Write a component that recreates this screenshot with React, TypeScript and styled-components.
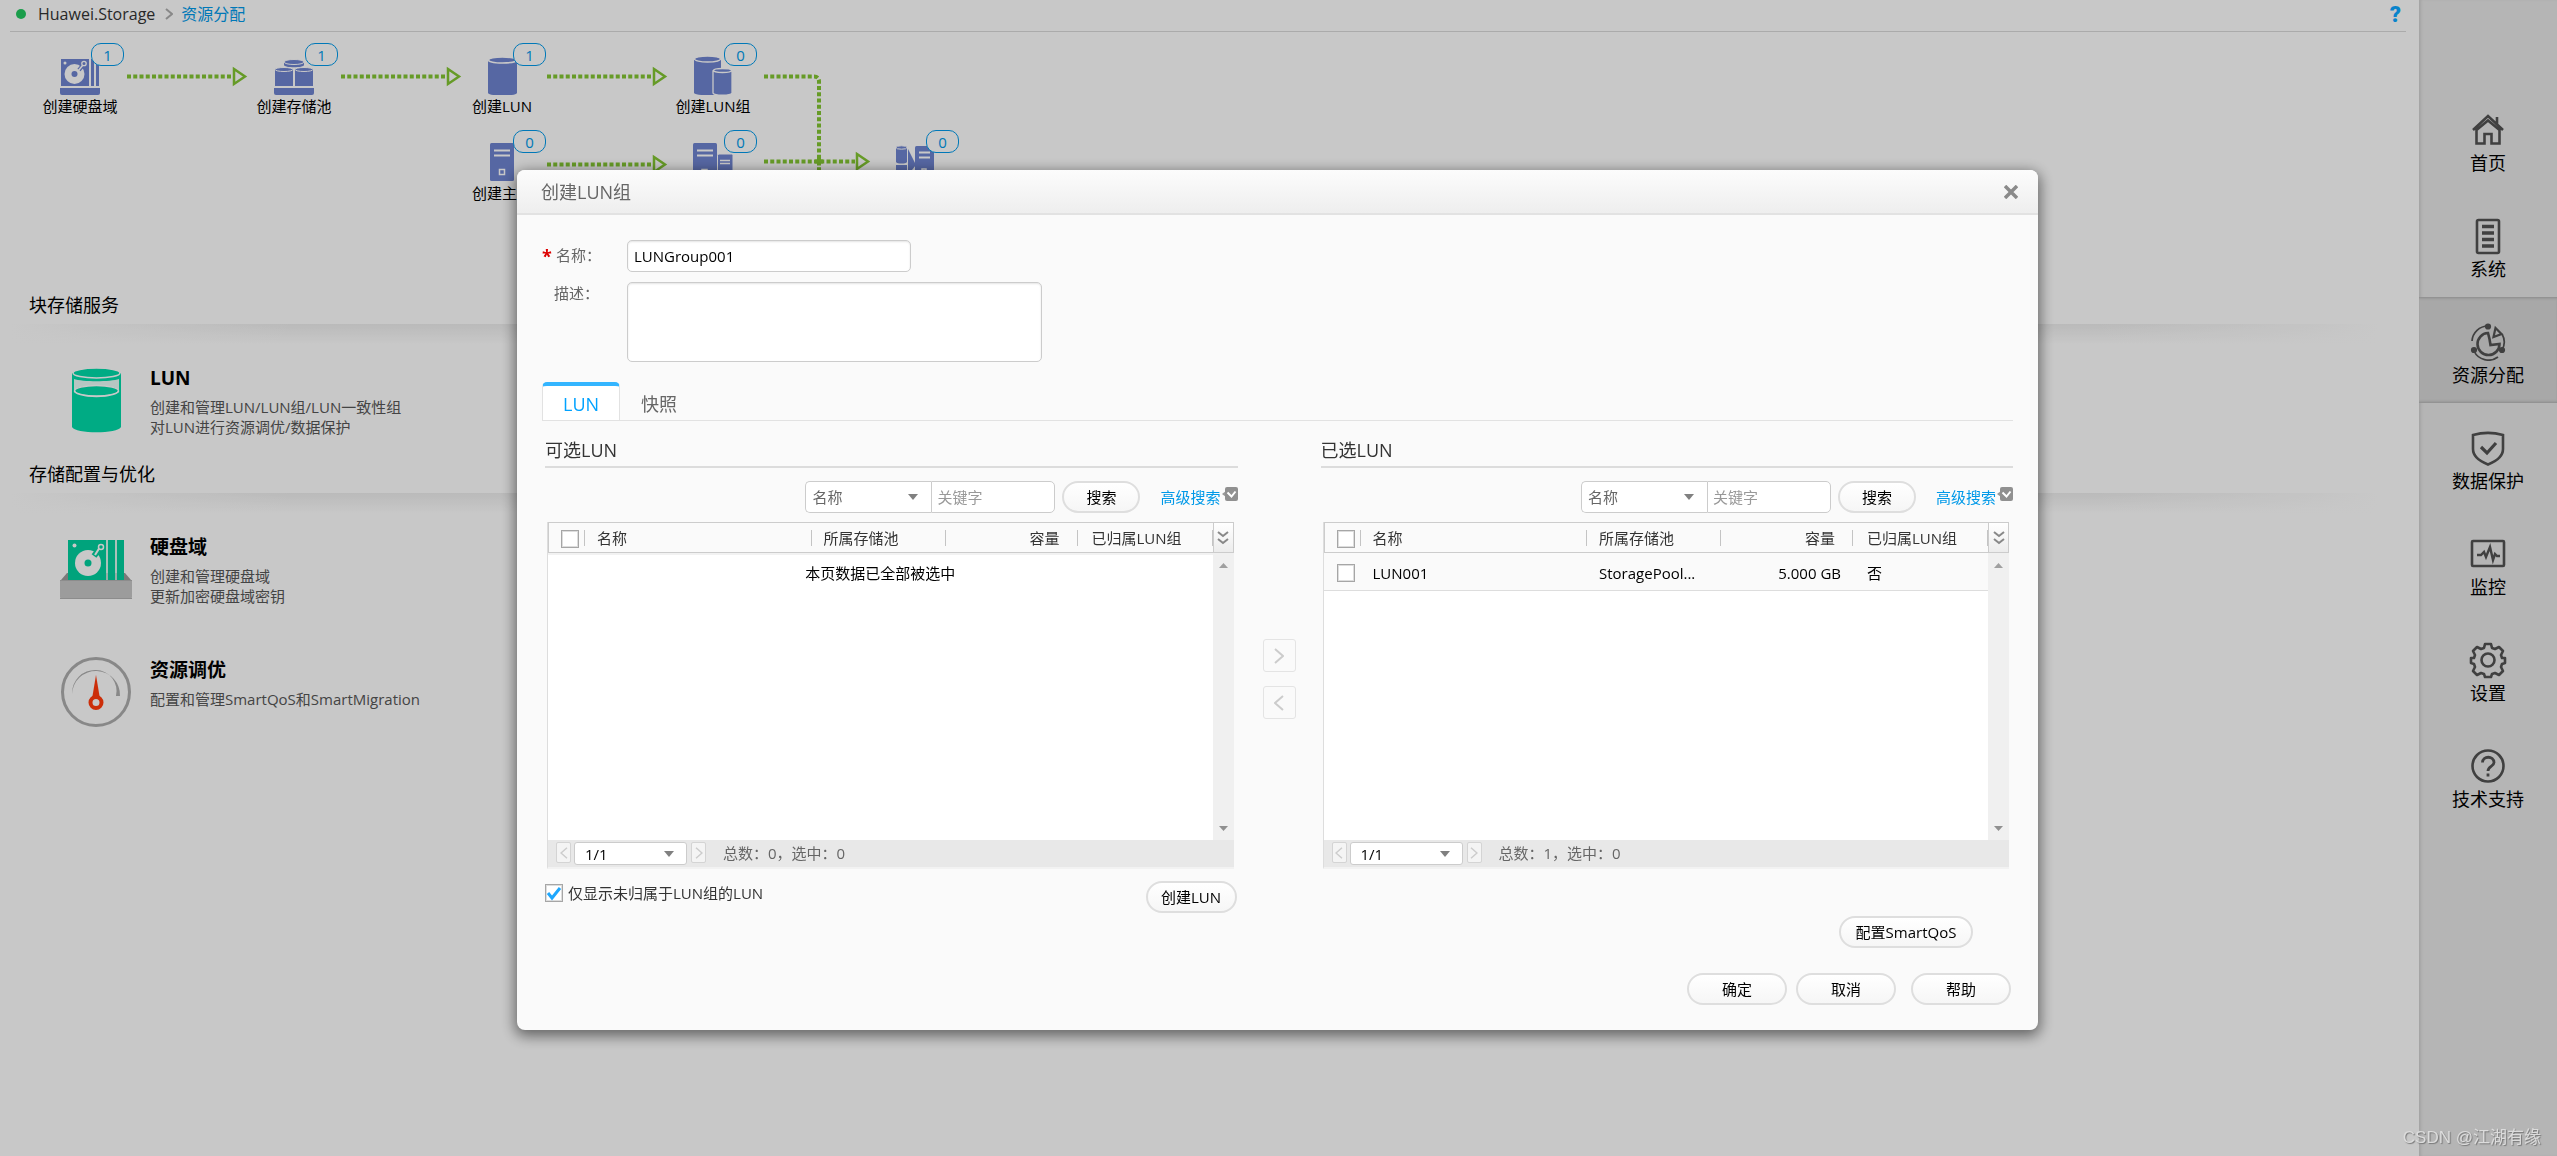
import React, { useState } from "react";
import styled, { createGlobalStyle, css } from "styled-components";

const GlobalStyle = createGlobalStyle`
  * { box-sizing: border-box; }
  body {
    margin: 0;
    background: #fafafa;
    color: #000;
    font-family: "Open Sans", "Noto Sans CJK SC", sans-serif;
    font-size: 15px;
    line-height: 20px;
  }
  button, input, select, textarea { font: inherit; color: inherit; margin: 0; }
  button { cursor: pointer; }
  h1, h2, h3, p, ul { margin: 0; padding: 0; font-weight: 400; }
  ul { list-style: none; }
  a { color: inherit; text-decoration: none; }
`;

/* ---------- page frame ---------- */

const Shell = styled.div`
  display: flex;
  min-height: 100vh;
`;

const Main = styled.main`
  flex: 1;
  min-width: 0;
`;

const TopBar = styled.header`
  display: flex;
  align-items: center;
  height: 32px;
  margin: 0 13px 0 10px;
  padding: 0 5px 3px 6px;
  border-bottom: 1px solid #d6d6d6;
  font-size: 16px;
  color: #333;
`;

const StatusDot = styled.span`
  width: 10px;
  height: 10px;
  margin-right: 12px;
  border-radius: 50%;
  background: #22c55e;
`;

const Crumb = styled.a<{ $current?: boolean }>`
  color: ${(p) => (p.$current ? "#0097e6" : "#333")};
`;

const CrumbArrow = styled.svg`
  margin: 0 8px 0 10px;
`;

const HelpButton = styled.button`
  margin-left: auto;
  padding: 2px 0 0;
  border: 0;
  background: none;
  color: #0aa5ff;
  font-family: Roboto, sans-serif;
  font-size: 22px;
  font-weight: 900;
`;

/* ---------- workflow diagram ---------- */

const FlowCanvas = styled.div`
  position: relative;
  height: 254px;
`;

const Connectors = styled.svg`
  position: absolute;
  left: 0;
  top: 0;
  overflow: visible;
`;

const FlowNode = styled.a`
  position: absolute;
  display: flex;
  flex-direction: column;
  align-items: center;
  width: 100px;
`;

const FlowBadge = styled.span`
  position: absolute;
  left: 61px;
  top: 0;
  width: 33px;
  height: 23px;
  border: 1px solid #0097e6;
  border-radius: 10px;
  background: #fafafa;
  color: #0097e6;
  line-height: 22px;
  text-align: center;
`;

const FlowIcon = styled.svg`
  margin: 12px 0 1px;
`;

/* ---------- service sections ---------- */

const SectionTitle = styled.h2`
  padding-left: 29px;
  font-size: 18px;
  line-height: 38px;
`;

const SectionShade = styled.div`
  height: 20px;
  margin: 0 40px 0 10px;
  background: linear-gradient(to right, #fafafa, rgba(250, 250, 250, 0) 12%, rgba(250, 250, 250, 0) 88%, #fafafa),
    linear-gradient(to bottom, #e9e9e9, #fafafa);
`;

const ServiceList = styled.div`
  display: flex;
  flex-direction: column;
  gap: 50px;
  padding: 21px 0 17px 60px;
`;

const Service = styled.a`
  display: flex;
  gap: 18px;
  align-items: flex-start;
  color: #555;
`;

const ServiceName = styled.h3`
  margin-bottom: 6px;
  color: #000;
  font-size: 19px;
  font-weight: 700;
  line-height: 26px;
`;

/* ---------- right navigation ---------- */

const SideNav = styled.nav`
  width: 138px;
  padding-top: 85px;
  background: #e3e3e3;
  box-shadow: inset 3px 0 3px -1px #cccccc;
`;

const SideLink = styled.a<{ $active?: boolean }>`
  display: flex;
  flex-direction: column;
  align-items: center;
  height: 106px;
  padding-top: 26px;
  font-size: 18px;
  line-height: 28px;
  ${(p) =>
    p.$active &&
    css`
      background: #d2d2d2;
      box-shadow: inset 0 3px 3px -2px #aaa, inset 0 -3px 3px -2px #aaa;
    `}
`;

/* ---------- dialog ---------- */

const Backdrop = styled.div`
  position: fixed;
  inset: 0;
  display: flex;
  justify-content: center;
  align-items: flex-start;
  padding: 170px 2px 0 0;
  background: rgba(0, 0, 0, 0.2);
`;

const Dialog = styled.section`
  width: 1521px;
  max-width: calc(100vw - 48px);
  border-radius: 8px;
  background: #fafafa;
  box-shadow: 0 4px 14px 2px rgba(0, 0, 0, 0.5);
`;

const DialogHead = styled.header`
  display: flex;
  align-items: center;
  justify-content: space-between;
  height: 45px;
  padding: 0 18px 0 24px;
  border-bottom: 2px solid #e2e2e2;
  border-radius: 8px 8px 0 0;
  background: linear-gradient(#fcfcfc, #eeeeee);
  color: #666;
`;

const DialogTitle = styled.h1`
  font-size: 18px;
  line-height: 24px;
`;

const CloseButton = styled.button`
  display: flex;
  padding: 2px;
  border: 0;
  background: none;
`;

const DialogBody = styled.div`
  padding: 25px 25px 25px;
`;

const Field = styled.div`
  display: flex;
  align-items: flex-start;
  gap: 10px;
  margin-bottom: 10px;
  color: #666;
`;

const FieldLabel = styled.label<{ $tall?: boolean }>`
  display: flex;
  width: 75px;
  line-height: ${(p) => (p.$tall ? 22 : 30)}px;
`;

const Required = styled.span`
  width: 14px;
  color: #d00;
  font-weight: 700;
  font-size: 18px;
  line-height: 32px;
`;

const FieldIndent = styled.span`
  width: 12px;
`;

const boxed = css`
  border: 1px solid #ccc;
  border-radius: 5px;
  background: #fff;
  box-shadow: inset 0 1px 2px #e4e4e4;
  outline: none;
`;

const NameInput = styled.input`
  ${boxed}
  width: 284px;
  height: 32px;
  padding: 0 6px;
  color: #000;
`;

const DescriptionInput = styled.textarea`
  ${boxed}
  display: block;
  width: 415px;
  height: 80px;
  padding: 6px;
  resize: none;
`;

const Tabs = styled.div`
  display: flex;
  margin-top: 20px;
  border-bottom: 1px solid #e2e2e2;
`;

const Tab = styled.button<{ $active?: boolean }>`
  height: 38px;
  padding: 2px 20px 0;
  border: 1px solid transparent;
  border-top: 4px solid ${(p) => (p.$active ? "#33b5ff" : "transparent")};
  border-bottom: 0;
  border-radius: 5px 5px 0 0;
  background: ${(p) => (p.$active ? "#fff" : "none")};
  color: ${(p) => (p.$active ? "#00a2ff" : "#666")};
  font-size: 18px;
  ${(p) => p.$active && "border-left-color: #e2e2e2; border-right-color: #e2e2e2;"}
`;

const Panels = styled.div`
  display: flex;
  padding: 16px 0 0 3px;
`;

const Panel = styled.div`
  flex: 1;
  min-width: 0;
`;

const PanelTitle = styled.h2`
  height: 31px;
  border-bottom: 2px solid #dcdcdc;
  color: #333;
  font-size: 18px;
  line-height: 26px;
`;

const SearchRow = styled.div`
  display: flex;
  align-items: center;
  justify-content: flex-end;
  margin: 13px 0 9px;
`;

const SelectWrap = styled.span<{ $width: number }>`
  display: inline-grid;
  align-items: center;
  width: ${(p) => p.$width}px;

  > * { grid-area: 1 / 1; }
  > svg { justify-self: end; margin-right: 12px; pointer-events: none; }
`;

const FieldSelect = styled.select`
  appearance: none;
  width: 100%;
  height: 32px;
  padding: 0 6px;
  border: 1px solid #ccc;
  border-right: 0;
  border-radius: 5px 0 0 5px;
  background: #fff;
  color: #666;
`;

const PageSelect = styled.select`
  appearance: none;
  width: 100%;
  height: 23px;
  padding: 0 10px;
  border: 1px solid #ccc;
  border-radius: 3px;
  background: #fff;
  color: #000;
`;

const KeywordInput = styled.input`
  width: 124px;
  height: 32px;
  padding: 0 5px;
  border: 1px solid #ccc;
  border-radius: 0 5px 5px 0;
  background: #fff;
  &::placeholder { color: #999; opacity: 1; }
`;

const PillButton = styled.button<{ $width: number }>`
  width: ${(p) => p.$width}px;
  height: 32px;
  padding: 0;
  border: 2px solid #dedede;
  border-radius: 16px;
  background: linear-gradient(#fff, #f6f6f6);
  color: #000;
`;

const SearchButton = styled(PillButton)`
  margin: 0 20px 0 7px;
`;

const AdvancedLink = styled.a`
  display: flex;
  align-items: flex-start;
  gap: 1px;
  color: #0099e8;
`;

const Grid = styled.div`
  width: calc(100% - 6px);
  margin-left: 2px;
  border-left: 1px solid #ddd;
  border-bottom: 2px solid #f2f2f2;
`;

const GridMain = styled.div`
  display: flex;
  height: 318px;
  background: #fff;
`;

const TableArea = styled.div`
  flex: 1;
  min-width: 0;
`;

const Table = styled.table`
  width: 100%;
  table-layout: fixed;
  border-collapse: separate;
  border-spacing: 0;
`;

const HeadCell = styled.th<{ $right?: boolean; $first?: boolean }>`
  height: 31px;
  padding: 0;
  border-top: 1px solid #ccc;
  border-bottom: 1px solid #ccc;
  ${(p) => p.$first && "border-left: 1px solid #ccc;"}
  background: #fafafa;
  box-shadow: 0 2px 0 #f2f2f2;
  color: #333;
  font-weight: 400;
  text-align: ${(p) => (p.$right ? "right" : "left")};
`;

const HeadLabel = styled.span<{ $right?: boolean; $wide?: boolean }>`
  display: block;
  height: 16px;
  padding: ${(p) => (p.$right ? "0 17px 0 0" : p.$wide ? "0 0 0 14px" : "0 0 0 12px")};
  border-right: 1px solid #c4c4c4;
  line-height: 16px;
  white-space: nowrap;
`;

const BodyCell = styled.td<{ $right?: boolean; $wide?: boolean }>`
  height: 38px;
  padding: ${(p) => (p.$right ? "2px 12px 0 0" : p.$wide ? "2px 0 0 14px" : "2px 0 0 12px")};
  border-bottom: 1px solid #ddd;
  background: #fafafa;
  text-align: ${(p) => (p.$right ? "right" : "left")};
  white-space: nowrap;
`;

const SelectCell = styled(BodyCell)`
  padding-left: 13px;
`;

const EmptyCell = styled.td`
  height: 40px;
  padding: 0;
  text-align: center;
`;

const CheckBox = styled.input`
  appearance: none;
  display: block;
  width: 18px;
  height: 18px;
  border: 1px solid #a6a6a6;
  background: #fff;
  box-shadow: inset 0 0 0 1px #ddd;
`;

const Side = styled.div`
  display: flex;
  flex-direction: column;
  width: 21px;
`;

const ColumnMenu = styled.button`
  display: flex;
  align-items: center;
  justify-content: center;
  height: 31px;
  padding: 0;
  border: 1px solid #ccc;
  background: linear-gradient(#fff, #ececec);
`;

const ScrollTrack = styled.div`
  display: flex;
  flex: 1;
  flex-direction: column;
  align-items: center;
  justify-content: space-between;
  padding: 10px 0 9px;
  background: #f0f0f0;
`;

const Pager = styled.div`
  display: flex;
  align-items: flex-start;
  height: 27px;
  padding: 2px 8px 0;
  background: #e8e8e8;
  color: #666;
`;

const PageButton = styled.button`
  display: flex;
  align-items: center;
  justify-content: center;
  width: 15px;
  height: 21px;
  margin-right: 3px;
  padding: 0;
  border: 1px solid #d4d4d4;
  border-radius: 2px;
  background: #f4f4f4;
`;

const PageStatus = styled.span`
  padding-left: 14px;
  line-height: 22px;
`;

const PagerSelectWrap = styled(SelectWrap)`
  margin-right: 4px;
`;

const Transfer = styled.div`
  display: flex;
  flex-direction: column;
  gap: 14px;
  align-items: center;
  width: 83px;
  padding-top: 202px;
`;

const TransferButton = styled.button`
  display: flex;
  align-items: center;
  justify-content: center;
  width: 33px;
  height: 33px;
  padding: 0;
  border: 1px solid #e4e4e4;
  border-radius: 3px;
  background: #fafafa;
`;

const BelowGrid = styled.div`
  display: flex;
  align-items: flex-start;
  justify-content: space-between;
  padding: 12px 1px 0 0;
`;

const FilterOption = styled.label`
  display: flex;
  align-items: center;
  gap: 5px;
  padding-top: 2px;
  color: #333;
`;

const FilterCheck = styled.span`
  display: inline-grid;
  > * { grid-area: 1 / 1; }
  > svg { pointer-events: none; }
`;

const Actions = styled.div<{ $inset?: number; $top: number }>`
  display: flex;
  justify-content: flex-end;
  gap: 9px;
  padding: ${(p) => p.$top}px ${(p) => p.$inset ?? 2}px 0 0;
`;

const HelpAction = styled(PillButton)`
  margin-left: 6px;
`;

const Watermark = styled.div`
  position: fixed;
  right: 16px;
  bottom: 5px;
  color: #dcdcdc;
  font-family: "Liberation Sans", "Noto Sans CJK SC", sans-serif;
  font-size: 17px;
  line-height: 26px;
  text-shadow: 1px 1px 1px #777;
`;

/* ---------- drawings ---------- */

const BLUE = "#6c81cc";
const LINE = "#fafafa";

const Disks = () => (
  <FlowIcon width="40" height="40" viewBox="0 0 40 40">
    <path d="M1 4h28v27H1z M31 4h3v27h-3z M36 4h3v27h-3z" fill={BLUE} />
    <path d="M0 33h40v5a2 2 0 0 1-2 2H2a2 2 0 0 1-2-2z" fill={BLUE} />
    <circle cx="14.500" cy="19" r="10" fill={LINE} />
    <circle cx="14.500" cy="19" r="3" fill={BLUE} />
    <path d="M19 15l5-6" stroke={BLUE} strokeWidth="4" />
    <path d="M18.500 15.500l4-5" stroke={LINE} strokeWidth="1.500" />
    <circle cx="24" cy="8.500" r="2.200" fill={BLUE} stroke={LINE} strokeWidth="1.300" />
    <circle cx="5" cy="8" r="1.500" fill={LINE} />
  </FlowIcon>
);

const Pool = () => (
  <FlowIcon width="40" height="40" viewBox="0 0 40 40">
    <path d="M10 7v3c0 3 20 3 20 0V7z" fill={BLUE} />
    <ellipse cx="20" cy="7" rx="10" ry="2.500" fill={BLUE} stroke={LINE} />
    <path d="M1 15h18v16H1z M21 15h18v16H21z" fill={BLUE} />
    <ellipse cx="10" cy="14.500" rx="9" ry="2" fill={BLUE} stroke={LINE} />
    <ellipse cx="30" cy="14.500" rx="9" ry="2" fill={BLUE} stroke={LINE} />
    <path d="M0 33h40v5a2 2 0 0 1-2 2H2a2 2 0 0 1-2-2z" fill={BLUE} />
  </FlowIcon>
);

const Cylinder = () => (
  <FlowIcon width="40" height="40" viewBox="0 0 40 40">
    <path d="M6 6v32c2 3.500 27 3.500 29 0V6z" fill={BLUE} />
    <ellipse cx="20.500" cy="5" rx="14" ry="3" fill={BLUE} stroke={LINE} strokeWidth="1.500" />
  </FlowIcon>
);

const CylinderPair = () => (
  <FlowIcon width="40" height="40" viewBox="0 0 40 40">
    <path d="M1 5v33c2 3 25 3 27 0V5z" fill={BLUE} />
    <ellipse cx="14.500" cy="4" rx="13" ry="3" fill={BLUE} stroke={LINE} strokeWidth="1.300" />
    <path d="M20 16v22c1 3 18 3 19 0V16z" fill={BLUE} stroke={LINE} strokeWidth="1.300" />
    <ellipse cx="29.500" cy="15.500" rx="9" ry="2" fill={BLUE} stroke={LINE} strokeWidth="1.300" />
  </FlowIcon>
);

const Host = () => (
  <FlowIcon width="40" height="40" viewBox="0 0 40 40">
    <rect x="8" y="1" width="24" height="38" rx="1.500" fill={BLUE} />
    <path d="M12 8.500h16M12 13.500h16" stroke={LINE} strokeWidth="2" />
    <rect x="17.500" y="27.500" width="5" height="5" fill="none" stroke={LINE} strokeWidth="1.500" />
  </FlowIcon>
);

const HostPair = () => (
  <FlowIcon width="40" height="40" viewBox="0 0 40 40">
    <rect x="0" y="1" width="24" height="38" rx="1.500" fill={BLUE} />
    <path d="M4 8.500h16M4 13.500h16" stroke={LINE} strokeWidth="2" />
    <rect x="9" y="27.500" width="5" height="5" fill="none" stroke={LINE} strokeWidth="1.500" />
    <rect x="24.500" y="12" width="15.500" height="28" rx="1.500" fill={BLUE} stroke={LINE} />
    <path d="M27 18.500h10M27 21.500h10" stroke={LINE} strokeWidth="1.300" />
  </FlowIcon>
);

const Mapping = () => (
  <FlowIcon width="40" height="40" viewBox="0 0 40 40">
    <path d="M1 6v14c1 2 10 2 11 0V6z M1 23v12c1 2 10 2 11 0V23z" fill={BLUE} />
    <ellipse cx="6.500" cy="5.500" rx="5.500" ry="1.700" fill={BLUE} stroke={LINE} />
    <path d="M13 7l8 16-8 10z" fill={BLUE} />
    <rect x="20" y="4" width="19" height="32" rx="1.500" fill={BLUE} />
    <path d="M24 10.500h11M24 15.500h11" stroke={LINE} strokeWidth="2" />
    <rect x="27" y="27" width="4" height="5" fill="none" stroke={LINE} strokeWidth="1.500" />
  </FlowIcon>
);

const ArrowHead = ({ x, y }: { x: number; y: number }) => (
  <path d={`M${x} ${y - 7.5}l11 7.500l-11 7.500z`} fill="none" stroke="#80c231" strokeWidth="2.500" />
);

const LunArt = () => (
  <svg width="72" height="73" viewBox="0 0 72 73">
    <path d="M12 8v54c3 7 46 7 49 0V8z" fill="#00d6a6" />
    <ellipse cx="36.500" cy="8" rx="23.500" ry="5" fill="#00d6a6" stroke="#fafafa" strokeWidth="1.500" />
    <path d="M14 14c8 3 37 3 45 0v13H14z" fill="#e4f8f3" />
    <ellipse cx="36.500" cy="26" rx="22" ry="5.500" fill="#00d6a6" stroke="#fafafa" strokeWidth="1.500" />
    <path d="M14.500 27c2 4.500 42 4.500 44 0v4h-44z" fill="#00d6a6" />
    <path d="M14.500 26c2 6.500 42 6.500 44 0" fill="none" stroke="#fafafa" strokeWidth="1.500" />
  </svg>
);

const DiskDomainArt = () => (
  <svg width="72" height="73" viewBox="0 0 72 73">
    <path d="M1 46l6-7h58l6 7z" fill="#999" />
    <path d="M8 6h38v41H8z M48 6h7v41h-7z M57 6h7v41h-7z" fill="#00cc9c" />
    <path d="M47 6v41M56 6v41" stroke="#c9efe4" strokeWidth="1.500" />
    <circle cx="28" cy="29" r="13" fill="#fafafa" />
    <circle cx="28" cy="29" r="3.500" fill="#00cc9c" />
    <path d="M34 22l7-9" stroke="#00cc9c" strokeWidth="6" />
    <path d="M35 21l5-8" stroke="#fafafa" strokeWidth="2" />
    <circle cx="41" cy="13" r="2.500" fill="#00cc9c" stroke="#fafafa" strokeWidth="1.500" />
    <circle cx="14.500" cy="11.500" r="2" fill="#fafafa" />
    <path d="M0 46h72v17a2 2 0 0 1-2 2H2a2 2 0 0 1-2-2z" fill="#c4c4c4" />
    <path d="M0 64.500h72M0 46.500h72" stroke="#b0b0b0" />
  </svg>
);

const GaugeArt = () => (
  <svg width="72" height="72" viewBox="0 1 72 72">
    <circle cx="36" cy="36" r="33.500" fill="#fafafa" stroke="#aaa" strokeWidth="3" />
    <path d="M12 38A24 24 0 1 1 60 40h-4A21 21 0 0 0 36 14A23 23 0 0 0 12 38z" fill="#aaa" />
    <path d="M36 19l4 24h-8z" fill="#ff3a0c" />
    <circle cx="36" cy="46.500" r="5.500" fill="#fafafa" stroke="#ff3a0c" strokeWidth="4" />
  </svg>
);

const Nav = ({ children }: { children: React.ReactNode }) => (
  <svg width="38" height="38" viewBox="0 0 38 38" fill="none" stroke="#505050" strokeWidth="2.600">
    {children}
  </svg>
);

const HomeIcon = () => (
  <Nav>
    <path d="M4 19L19 5l15 14M28 6v7M7.500 19v13.500h8V23h7v9.500h8V19L19 9.500z" />
  </Nav>
);
const SystemIcon = () => (
  <Nav>
    <rect x="8" y="3" width="22" height="33" rx="1.500" />
    <path d="M13 9.500h12M13 16h12M13 22.500h12M13 29h12" strokeWidth="3.600" />
  </Nav>
);
const ResourceIcon = () => (
  <Nav>
    <path d="M19 10a11 11 0 1 0 11.500 11l-9 1 -1-6z" />
    <path d="M24.500 14l2-9 6 6z" strokeWidth="2.200" />
    <path d="M19 3A16 16 0 0 0 3 18M5 28a16 16 0 0 0 24 6M33 27a16 16 0 0 0 0-16" strokeWidth="1.700" />
    <circle cx="19" cy="3.500" r="1.800" fill="#505050" />
    <circle cx="5" cy="27" r="1.800" fill="#505050" />
    <circle cx="33" cy="27" r="1.800" fill="#505050" />
  </Nav>
);
const ShieldIcon = () => (
  <Nav>
    <path d="M4 6c9-2.500 21-2.500 30 0v14c0 7-6 12-15 15.500C10 32 4 27 4 20z" />
    <path d="M12 18l6 6 9-10" strokeWidth="3.200" />
  </Nav>
);
const MonitorIcon = () => (
  <Nav>
    <rect x="3" y="6" width="32" height="25" rx="1" />
    <path d="M8 20h4l3-3 2 5 4-10 3 13 2-6 2 2h3" strokeWidth="2.400" />
  </Nav>
);
const GearIcon = () => (
  <Nav>
    <path
      d="M16 3h6l1 4 3 1 4-2 4 4-2 4 1 3 3 0v5l-3 1-1 3 2 4-4 4-4-2-3 1-1 3h-6l-1-3-3-1-4 2-4-4 2-4-1-3-3-1v-5l3 0 1-3-2-4 4-4 4 2 3-1z"
      strokeLinejoin="round"
    />
    <circle cx="19" cy="19" r="6.500" />
  </Nav>
);
const SupportIcon = () => (
  <Nav>
    <circle cx="19" cy="19" r="15.500" />
    <path d="M13.500 15.500c0-7 11.500-7 11.500 0 0 4-6 4-6 8.500M19 26.500v3" strokeWidth="2.800" />
  </Nav>
);

const Caret = () => (
  <svg width="12" height="8" viewBox="0 0 12 8">
    <path d="M1 1h10L6 7z" fill="#808080" />
  </svg>
);

const Chevron = ({ left, size = 16, color = "#ccc" }: { left?: boolean; size?: number; color?: string }) => (
  <svg width={size / 2 + 2} height={size} viewBox="0 0 10 16" fill="none" stroke={color} strokeWidth="2">
    <path d={left ? "M9 1L1 8l8 7" : "M1 1l8 7-8 7"} />
  </svg>
);

const AdvancedIcon = () => (
  <svg width="16" height="14" viewBox="0 0 16 14">
    <path d="M0 7l4-3v6z" fill="#999" />
    <rect x="3" y="0" width="13" height="14" rx="2" fill="#909090" />
    <path d="M5.500 5.500l4 4 4-5" fill="none" stroke="#fff" strokeWidth="2" />
  </svg>
);

/* ---------- data ---------- */

const flowNodes = [
  { label: "创建硬盘域", count: 1, x: 30, y: 11, Icon: Disks },
  { label: "创建存储池", count: 1, x: 244, y: 11, Icon: Pool },
  { label: "创建LUN", count: 1, x: 452, y: 11, Icon: Cylinder },
  { label: "创建LUN组", count: 0, x: 663, y: 11, Icon: CylinderPair },
  { label: "创建主机", count: 0, x: 452, y: 98, Icon: Host },
  { label: "创建主机组", count: 0, x: 663, y: 98, Icon: HostPair },
  { label: "创建映射视图", count: 0, x: 865, y: 98, Icon: Mapping },
];

const navItems = [
  { label: "首页", Icon: HomeIcon },
  { label: "系统", Icon: SystemIcon },
  { label: "资源分配", Icon: ResourceIcon },
  { label: "数据保护", Icon: ShieldIcon },
  { label: "监控", Icon: MonitorIcon },
  { label: "设置", Icon: GearIcon },
  { label: "技术支持", Icon: SupportIcon },
];

type Lun = { name: string; pool: string; capacity: string; grouped: string };

const selectedLuns: Lun[] = [{ name: "LUN001", pool: "StoragePool...", capacity: "5.000 GB", grouped: "否" }];

/* ---------- LUN picker ---------- */

function LunPanel({ title, rows, footer }: { title: string; rows: Lun[]; footer?: React.ReactNode }) {
  return (
    <Panel>
      <PanelTitle>{title}</PanelTitle>
      <SearchRow>
        <SelectWrap $width={126}>
          <FieldSelect aria-label="搜索字段">
            <option>名称</option>
          </FieldSelect>
          <Caret />
        </SelectWrap>
        <KeywordInput placeholder="关键字" aria-label="关键字" />
        <SearchButton $width={78}>搜索</SearchButton>
        <AdvancedLink href="#">
          高级搜索
          <AdvancedIcon />
        </AdvancedLink>
      </SearchRow>
      <Grid>
        <GridMain>
          <TableArea>
            <Table>
              <colgroup>
                <col width="37" />
                <col />
                <col width="134" />
                <col width="132" />
                <col width="135" />
              </colgroup>
              <thead>
                <tr>
                  <HeadCell $first>
                    <HeadLabel>
                      <CheckBox type="checkbox" aria-label="全选" />
                    </HeadLabel>
                  </HeadCell>
                  <HeadCell>
                    <HeadLabel>名称</HeadLabel>
                  </HeadCell>
                  <HeadCell>
                    <HeadLabel>所属存储池</HeadLabel>
                  </HeadCell>
                  <HeadCell $right>
                    <HeadLabel $right>容量</HeadLabel>
                  </HeadCell>
                  <HeadCell>
                    <HeadLabel $wide>已归属LUN组</HeadLabel>
                  </HeadCell>
                </tr>
              </thead>
              <tbody>
                {rows.length === 0 && (
                  <tr>
                    <EmptyCell colSpan={5}>本页数据已全部被选中</EmptyCell>
                  </tr>
                )}
                {rows.map((row) => (
                  <tr key={row.name}>
                    <SelectCell>
                      <CheckBox type="checkbox" aria-label={row.name} />
                    </SelectCell>
                    <BodyCell>{row.name}</BodyCell>
                    <BodyCell>{row.pool}</BodyCell>
                    <BodyCell $right>{row.capacity}</BodyCell>
                    <BodyCell $wide>{row.grouped}</BodyCell>
                  </tr>
                ))}
              </tbody>
            </Table>
          </TableArea>
          <Side>
            <ColumnMenu aria-label="列设置">
              <svg width="12" height="14" viewBox="0 0 12 14" fill="none" stroke="#888" strokeWidth="2">
                <path d="M1 1l5 4 5-4M1 8l5 4 5-4" />
              </svg>
            </ColumnMenu>
            <ScrollTrack>
              <svg width="9" height="5" viewBox="0 0 9 5">
                <path d="M0 5h9L4.500 0z" fill="#a0a0a0" />
              </svg>
              <svg width="9" height="5" viewBox="0 0 9 5">
                <path d="M0 0h9L4.500 5z" fill="#909090" />
              </svg>
            </ScrollTrack>
          </Side>
        </GridMain>
        <Pager>
          <PageButton aria-label="上一页">
            <Chevron left size={12} />
          </PageButton>
          <PagerSelectWrap $width={113}>
            <PageSelect aria-label="页码">
              <option>1/1</option>
            </PageSelect>
            <Caret />
          </PagerSelectWrap>
          <PageButton aria-label="下一页">
            <Chevron size={12} />
          </PageButton>
          <PageStatus>总数：{rows.length}，选中：0</PageStatus>
        </Pager>
      </Grid>
      {footer}
    </Panel>
  );
}

export default function App() {
  const [name, setName] = useState("LUNGroup001");
  const [onlyFree, setOnlyFree] = useState(true);

  return (
    <>
      <GlobalStyle />
      <Shell>
        <Main>
          <TopBar>
            <StatusDot />
            <Crumb href="#">Huawei.Storage</Crumb>
            <CrumbArrow width="8" height="12" viewBox="0 0 8 12" fill="none" stroke="#aaa" strokeWidth="2">
              <path d="M1 1l6 5-6 5" />
            </CrumbArrow>
            <Crumb href="#" $current>
              资源分配
            </Crumb>
            <HelpButton aria-label="帮助">?</HelpButton>
          </TopBar>

          <FlowCanvas>
            <Connectors width="960" height="254" fill="none" stroke="#80c231" strokeWidth="4">
              <g strokeDasharray="4 2.250">
                <path d="M127 44.500h105" />
                <path d="M341 44.500h105" />
                <path d="M547 44.500h105" />
                <path d="M547 132.500h105" />
                <path d="M764 44.500h50q5 0 5 5v90" />
                <path d="M764 129.500h91" />
              </g>
              <path d="M815 129.500h8M819 125.500v8" />
              <ArrowHead x={234} y={44.5} />
              <ArrowHead x={448} y={44.5} />
              <ArrowHead x={654} y={44.5} />
              <ArrowHead x={654} y={132.5} />
              <ArrowHead x={857} y={129.5} />
            </Connectors>
            {flowNodes.map(({ label, count, x, y, Icon }) => (
              <FlowNode key={label} href="#" style={{ left: x, top: y }}>
                <Icon />
                {label}
                <FlowBadge>{count}</FlowBadge>
              </FlowNode>
            ))}
          </FlowCanvas>

          <section>
            <SectionTitle>块存储服务</SectionTitle>
            <SectionShade />
            <ServiceList>
              <Service href="#">
                <LunArt />
                <div>
                  <ServiceName>LUN</ServiceName>
                  <p>创建和管理LUN/LUN组/LUN一致性组</p>
                  <p>对LUN进行资源调优/数据保护</p>
                </div>
              </Service>
            </ServiceList>
          </section>
          <section>
            <SectionTitle>存储配置与优化</SectionTitle>
            <SectionShade />
            <ServiceList>
              <Service href="#">
                <DiskDomainArt />
                <div>
                  <ServiceName>硬盘域</ServiceName>
                  <p>创建和管理硬盘域</p>
                  <p>更新加密硬盘域密钥</p>
                </div>
              </Service>
              <Service href="#">
                <GaugeArt />
                <div>
                  <ServiceName>资源调优</ServiceName>
                  <p>配置和管理SmartQoS和SmartMigration</p>
                </div>
              </Service>
            </ServiceList>
          </section>
        </Main>

        <SideNav>
          {navItems.map(({ label, Icon }) => (
            <SideLink key={label} href="#" $active={label === "资源分配"}>
              <Icon />
              {label}
            </SideLink>
          ))}
        </SideNav>
      </Shell>

      <Backdrop>
        <Dialog role="dialog" aria-labelledby="dialog-title">
          <DialogHead>
            <DialogTitle id="dialog-title">创建LUN组</DialogTitle>
            <CloseButton aria-label="关闭">
              <svg width="14" height="14" viewBox="0 0 14 14" stroke="#8a8a8a" strokeWidth="3.500">
                <path d="M1 1l12 12M13 1L1 13" />
              </svg>
            </CloseButton>
          </DialogHead>
          <DialogBody>
            <Field>
              <FieldLabel htmlFor="group-name">
                <Required>*</Required>名称：
              </FieldLabel>
              <NameInput id="group-name" value={name} onChange={(e) => setName(e.target.value)} />
            </Field>
            <Field>
              <FieldLabel htmlFor="group-desc" $tall>
                <FieldIndent />
                描述：
              </FieldLabel>
              <DescriptionInput id="group-desc" />
            </Field>

            <Tabs role="tablist">
              <Tab role="tab" aria-selected $active>
                LUN
              </Tab>
              <Tab role="tab">快照</Tab>
            </Tabs>

            <Panels>
              <LunPanel
                title="可选LUN"
                rows={[]}
                footer={
                  <BelowGrid>
                    <FilterOption>
                      <FilterCheck>
                        <CheckBox type="checkbox" checked={onlyFree} onChange={() => setOnlyFree(!onlyFree)} />
                        {onlyFree && (
                          <svg width="18" height="18" viewBox="0 0 18 18" fill="none" stroke="#1ea7fd" strokeWidth="3">
                            <path d="M3 9l4 5 8-10" />
                          </svg>
                        )}
                      </FilterCheck>
                      仅显示未归属于LUN组的LUN
                    </FilterOption>
                    <PillButton $width={91}>创建LUN</PillButton>
                  </BelowGrid>
                }
              />
              <Transfer>
                <TransferButton aria-label="添加">
                  <Chevron size={16} />
                </TransferButton>
                <TransferButton aria-label="移除">
                  <Chevron left size={16} />
                </TransferButton>
              </Transfer>
              <LunPanel title="已选LUN" rows={selectedLuns} />
            </Panels>

            <Actions $top={3} $inset={40}>
              <PillButton $width={134}>配置SmartQoS</PillButton>
            </Actions>
            <Actions $top={25}>
              <PillButton $width={100}>确定</PillButton>
              <PillButton $width={100}>取消</PillButton>
              <HelpAction $width={100}>帮助</HelpAction>
            </Actions>
          </DialogBody>
        </Dialog>
      </Backdrop>

      <Watermark>CSDN @江湖有缘</Watermark>
    </>
  );
}
